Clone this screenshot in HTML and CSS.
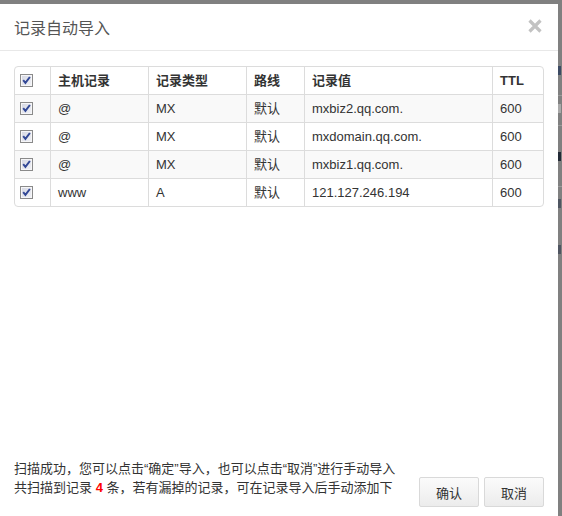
FILE: index.html
```html
<!DOCTYPE html>
<html lang="zh-CN">
<head>
<meta charset="utf-8">
<title>记录自动导入</title>
<link rel="stylesheet" href="styles.css">
</head>
<body>
<div class="dialog">
  <div class="dlg-header">
    <h3 class="dlg-title">记录自动导入</h3>
    <span class="dlg-close" aria-label="关闭">
      <svg width="14" height="14" viewBox="0 0 14 14"><path d="M1.5 1.5 L12.5 12.5 M12.5 1.5 L1.5 12.5" stroke="#c2c2c2" stroke-width="3.2" stroke-linecap="butt"/></svg>
    </span>
  </div>
  <div class="dlg-body">
    <div class="table-wrap">
      <table class="rec-table">
        <colgroup>
          <col class="c-chk"><col class="c-host"><col class="c-type"><col class="c-line"><col class="c-val"><col class="c-ttl">
        </colgroup>
        <thead>
          <tr>
            <th class="chk"><span class="cb"></span></th>
            <th>主机记录</th><th>记录类型</th><th>路线</th><th>记录值</th><th>TTL</th>
          </tr>
        </thead>
        <tbody>
          <tr class="odd"><td class="chk"><span class="cb"></span></td><td>@</td><td>MX</td><td>默认</td><td>mxbiz2.qq.com.</td><td>600</td></tr>
          <tr><td class="chk"><span class="cb"></span></td><td>@</td><td>MX</td><td>默认</td><td>mxdomain.qq.com.</td><td>600</td></tr>
          <tr class="odd"><td class="chk"><span class="cb"></span></td><td>@</td><td>MX</td><td>默认</td><td>mxbiz1.qq.com.</td><td>600</td></tr>
          <tr><td class="chk"><span class="cb"></span></td><td>www</td><td>A</td><td>默认</td><td>121.127.246.194</td><td>600</td></tr>
        </tbody>
      </table>
    </div>
  </div>
  <div class="dlg-footer">
    <div class="footer-text">
      <p>扫描成功，您可以点击“确定”导入，也可以点击“取消”进行手动导入</p>
      <p>共扫描到记录 <b class="count">4</b> 条，若有漏掉的记录，可在记录导入后手动添加下</p>
    </div>
    <div class="footer-btns">
      <button class="btn">确认</button>
      <button class="btn">取消</button>
    </div>
  </div>
</div>
<div class="backdrop">
  <span class="bd-mark m1"></span>
  <span class="bd-line l1"></span>
  <span class="bd-mark m2"></span>
  <span class="bd-line l2"></span>
  <span class="bd-mark m3"></span>
  <span class="bd-line l3"></span>
  <span class="bd-mark m4"></span>
  <span class="bd-mark m5"></span>
</div>
</body>
</html>
```

FILE: styles.css
```css
* { box-sizing: border-box; }

html, body {
  margin: 0;
  height: 100%;
}

body {
  display: flex;
  background: #808080;
  font-family: "Liberation Sans", "Noto Sans CJK SC", sans-serif;
  font-size: 13px;
  color: #333;
  overflow: hidden;
}

.dialog {
  width: 558px;
  height: 512px;
  margin-top: 4px;
  background: #fff;
  display: flex;
  flex-direction: column;
  flex: none;
}

.dlg-header {
  height: 47px;
  border-bottom: 1px solid #e8e8e8;
  display: flex;
  align-items: center;
  justify-content: space-between;
  padding: 0 16px 0 14px;
}

.dlg-title {
  margin: 0;
  font-family: "Noto Sans CJK SC", sans-serif;
  font-weight: normal;
  font-size: 16px;
  color: #555;
  line-height: 20px;
}

.dlg-close {
  display: flex;
  margin-top: -2px;
}

.dlg-body {
  padding: 15px 14px 0 14px;
  flex: 1;
}

.table-wrap {
  width: 530px;
  border: 1px solid #dcdcdc;
  border-radius: 4px;
  overflow: hidden;
}

.rec-table {
  width: 528px;
  table-layout: fixed;
  border-collapse: separate;
  border-spacing: 0;
}

.c-chk { width: 35px; }
.c-host { width: 98px; }
.c-type { width: 98px; }
.c-line { width: 58px; }
.c-val { width: 188px; }
.c-ttl { width: 51px; }

.rec-table th,
.rec-table td {
  height: 27px;
  line-height: 27px;
  padding: 0 0 0 7px;
  text-align: left;
  white-space: nowrap;
  vertical-align: middle;
  color: #333;
  font-size: 13px;
}

.rec-table th {
  font-weight: bold;
}

.rec-table th + th,
.rec-table td + td {
  border-left: 1px solid #dcdcdc;
}

.rec-table tbody td {
  border-top: 1px solid #dcdcdc;
  height: 28px;
}

.rec-table tr.odd td {
  background: #f9f9f9;
}

.rec-table .chk {
  padding-left: 5px;
  font-size: 0;
  line-height: 0;
}

.cb {
  display: inline-block;
  width: 13px;
  height: 13px;
  border: 1px solid #8a8a8a;
  background:
    url("data:image/svg+xml;utf8,<svg xmlns='http://www.w3.org/2000/svg' width='11' height='11' viewBox='0 0 11 11'><path d='M2.2 5.2 L4.4 7.8 L8.9 2' fill='none' stroke='%23324896' stroke-width='2'/></svg>") center/11px 11px no-repeat,
    linear-gradient(135deg, #d4d6e2 0%, #f2f3f7 100%);
  box-shadow: inset 0 0 0 1px #f6f6f8;
  vertical-align: middle;
  margin-top: -1px;
}

.dlg-footer {
  display: flex;
  align-items: flex-end;
  justify-content: space-between;
  padding: 0 14px 9px 14px;
}

.footer-text {
  margin-bottom: 10px;
  font-family: "Liberation Sans", "Noto Sans CJK TC", sans-serif;
}

.footer-text p {
  margin: 0;
  line-height: 19px;
  font-size: 13px;
  color: #333;
}

.count {
  color: #f00;
  font-weight: bold;
  font-family: "Liberation Sans", sans-serif;
}

.footer-btns {
  display: flex;
  gap: 5px;
}

.btn {
  width: 60px;
  height: 30px;
  padding: 0;
  border: 1px solid #d9d9d9;
  border-radius: 2px;
  background: linear-gradient(#fbfbfb, #ececec);
  font-family: "Noto Sans CJK SC", sans-serif;
  font-size: 13px;
  color: #333;
}

.backdrop {
  flex: 1;
  display: flex;
  flex-direction: column;
  align-items: flex-start;
}

.bd-mark {
  display: block;
  width: 3px;
  height: 9px;
  background: #3c4a63;
}

.bd-line {
  display: block;
  width: 4px;
  height: 1px;
  background: #9a9a9a;
}

.m1 { margin-top: 66px; }
.l1 { margin-top: 20px; }
.m2 { margin-top: 8px; background: #a9a9a9; }
.l2 { margin-top: 12px; }
.m3 { margin-top: 26px; background: #222a36; }
.l3 { margin-top: 25px; }
.m4 { margin-top: 12px; background: #4f5561; }
.m5 { margin-top: 37px; background: #4f5561; }
```
